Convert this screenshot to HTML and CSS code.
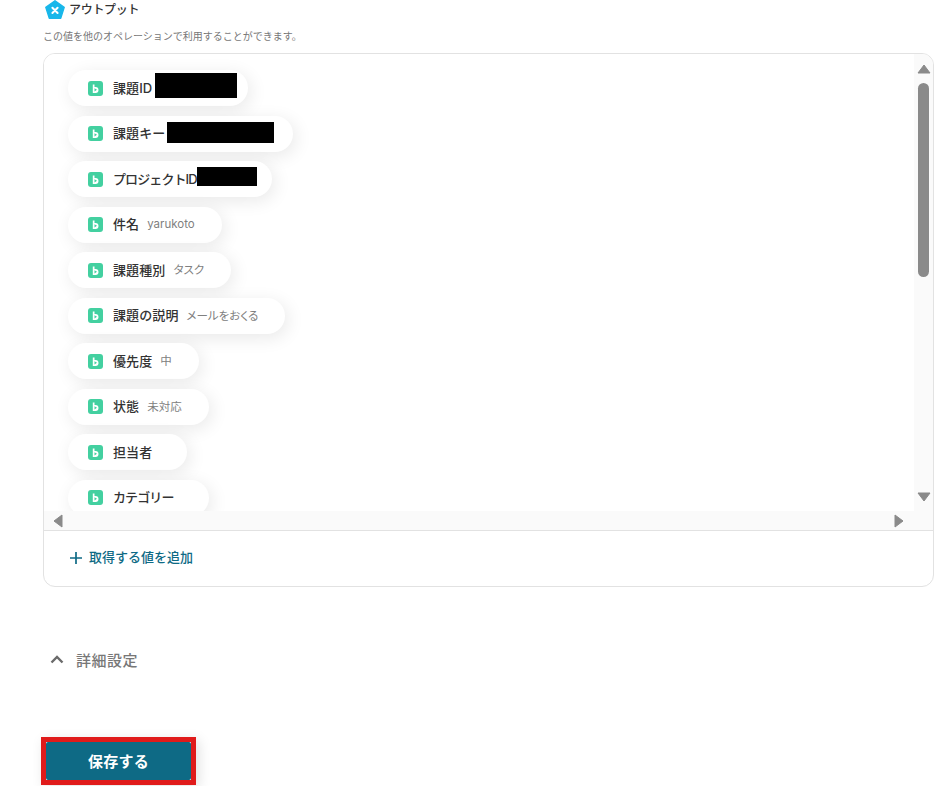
FILE: index.html
```html
<!DOCTYPE html>
<html lang="ja">
<head>
<meta charset="utf-8">
<title>アウトプット</title>
<link rel="stylesheet" href="styles.css">
</head>
<body>
<main class="page">
  <header class="heading">
    <svg class="heading-icon" viewBox="0 0 20 20" width="20" height="20"><path d="M10 .8 19.200 7.400 15.700 18.400H4.300L.8 7.400Z" fill="#18b7ea" stroke="#18b7ea" stroke-width="1.400" stroke-linejoin="round"/><path d="M7.400 7.700 12.600 13M12.600 7.700 7.400 13" stroke="#fff" stroke-width="2" stroke-linecap="round"/></svg>
    <h2 class="heading-title">アウトプット</h2>
  </header>
  <p class="hint">この値を他のオペレーションで利用することができます。</p>
  <section class="card">
    <div class="scroller">
      <div class="viewport">
        <ul class="pills">
          <li class="pill pill-1"><svg class="badge" viewBox="0 0 15 15"><rect width="15" height="15" rx="3" fill="#43d0a0"/><path fill-rule="evenodd" d="M4.800 3.600H6.500V6.100H7.600A2.900 2.900 0 0 1 7.600 11.900H4.800ZM6.500 7.300V10.400L9 8.850Z" fill="#fff"/></svg><span class="label">課題ID</span><span class="redact redact-1"></span></li>
          <li class="pill pill-2"><svg class="badge" viewBox="0 0 15 15"><rect width="15" height="15" rx="3" fill="#43d0a0"/><path fill-rule="evenodd" d="M4.800 3.600H6.500V6.100H7.600A2.900 2.900 0 0 1 7.600 11.900H4.800ZM6.500 7.300V10.400L9 8.850Z" fill="#fff"/></svg><span class="label">課題キー</span><span class="redact redact-2"></span></li>
          <li class="pill pill-3"><svg class="badge" viewBox="0 0 15 15"><rect width="15" height="15" rx="3" fill="#43d0a0"/><path fill-rule="evenodd" d="M4.800 3.600H6.500V6.100H7.600A2.900 2.900 0 0 1 7.600 11.900H4.800ZM6.500 7.300V10.400L9 8.850Z" fill="#fff"/></svg><span class="label label-tight">プロジェクトID</span><span class="redact redact-3"></span></li>
          <li class="pill"><svg class="badge" viewBox="0 0 15 15"><rect width="15" height="15" rx="3" fill="#43d0a0"/><path fill-rule="evenodd" d="M4.800 3.600H6.500V6.100H7.600A2.900 2.900 0 0 1 7.600 11.900H4.800ZM6.500 7.300V10.400L9 8.850Z" fill="#fff"/></svg><span class="label">件名</span><span class="value">yarukoto</span></li>
          <li class="pill"><svg class="badge" viewBox="0 0 15 15"><rect width="15" height="15" rx="3" fill="#43d0a0"/><path fill-rule="evenodd" d="M4.800 3.600H6.500V6.100H7.600A2.900 2.900 0 0 1 7.600 11.900H4.800ZM6.500 7.300V10.400L9 8.850Z" fill="#fff"/></svg><span class="label">課題種別</span><span class="value">タスク</span></li>
          <li class="pill"><svg class="badge" viewBox="0 0 15 15"><rect width="15" height="15" rx="3" fill="#43d0a0"/><path fill-rule="evenodd" d="M4.800 3.600H6.500V6.100H7.600A2.900 2.900 0 0 1 7.600 11.900H4.800ZM6.500 7.300V10.400L9 8.850Z" fill="#fff"/></svg><span class="label">課題の説明</span><span class="value">メールをおくる</span></li>
          <li class="pill"><svg class="badge" viewBox="0 0 15 15"><rect width="15" height="15" rx="3" fill="#43d0a0"/><path fill-rule="evenodd" d="M4.800 3.600H6.500V6.100H7.600A2.900 2.900 0 0 1 7.600 11.900H4.800ZM6.500 7.300V10.400L9 8.850Z" fill="#fff"/></svg><span class="label">優先度</span><span class="value">中</span></li>
          <li class="pill"><svg class="badge" viewBox="0 0 15 15"><rect width="15" height="15" rx="3" fill="#43d0a0"/><path fill-rule="evenodd" d="M4.800 3.600H6.500V6.100H7.600A2.900 2.900 0 0 1 7.600 11.900H4.800ZM6.500 7.300V10.400L9 8.850Z" fill="#fff"/></svg><span class="label">状態</span><span class="value">未対応</span></li>
          <li class="pill"><svg class="badge" viewBox="0 0 15 15"><rect width="15" height="15" rx="3" fill="#43d0a0"/><path fill-rule="evenodd" d="M4.800 3.600H6.500V6.100H7.600A2.900 2.900 0 0 1 7.600 11.900H4.800ZM6.500 7.300V10.400L9 8.850Z" fill="#fff"/></svg><span class="label">担当者</span><span class="value"></span></li>
          <li class="pill"><svg class="badge" viewBox="0 0 15 15"><rect width="15" height="15" rx="3" fill="#43d0a0"/><path fill-rule="evenodd" d="M4.800 3.600H6.500V6.100H7.600A2.900 2.900 0 0 1 7.600 11.900H4.800ZM6.500 7.300V10.400L9 8.850Z" fill="#fff"/></svg><span class="label label-tight">カテゴリー</span><span class="value"></span></li>
        </ul>
      </div>
      <div class="vbar">
        <svg class="arrow" viewBox="0 0 14 10" width="14" height="10"><path d="M7 1 13 9H1Z" fill="#8a8a8a" stroke="#8a8a8a" stroke-linejoin="round"/></svg>
        <div class="vthumb"></div>
        <svg class="arrow arrow-down" viewBox="0 0 14 10" width="14" height="10"><path d="M7 9 13 1H1Z" fill="#8a8a8a" stroke="#8a8a8a" stroke-linejoin="round"/></svg>
      </div>
      <div class="hbar">
        <svg viewBox="0 0 10 14" width="10" height="14"><path d="M1 7 9 1V13Z" fill="#8a8a8a" stroke="#8a8a8a" stroke-linejoin="round"/></svg>
        <svg viewBox="0 0 10 14" width="10" height="14"><path d="M9 7 1 1V13Z" fill="#8a8a8a" stroke="#8a8a8a" stroke-linejoin="round"/></svg>
      </div>
    </div>
    <div class="card-foot">
      <svg class="plus" viewBox="0 0 12 12" width="12" height="12"><path d="M6 0V12M0 6H12" stroke="#0e6a85" stroke-width="1.700"/></svg>
      <span class="add-text">取得する値を追加</span>
    </div>
  </section>
  <div class="details">
    <svg class="chevron" viewBox="0 0 14 9" width="14" height="9"><path d="M1.500 7.500 7 2l5.500 5.500" fill="none" stroke="#6b6b6b" stroke-width="2.400"/></svg>
    <span class="details-text">詳細設定</span>
  </div>
  <div class="save-frame"><button class="save" type="button">保存する</button></div>
</main>
</body>
</html>
```
FILE: styles.css
```css
* { box-sizing: border-box; }
html, body { margin: 0; height: 786px; overflow: hidden; background: #fff; }
body { font-family: Inter, "Noto Sans CJK JP", "Noto Sans", sans-serif; color: #333; }
.page { padding: 0 4px 0 43px; }
.heading { display: flex; align-items: center; gap: 4px; height: 20px; padding-left: 2px; }
.heading-icon { flex: none; }
.heading-title { margin: 0; font-size: 12px; font-weight: 500; color: #333; line-height: 20px; letter-spacing: -.3px; }
.hint { margin: 8px 0 0; font-size: 10px; line-height: 16px; color: #777; height: 25px; }
.card { border: 1px solid #e2e2e2; border-radius: 12px; height: 534px; overflow: hidden; }
.scroller { display: grid; grid-template-columns: 1fr 19px; grid-template-rows: 457px 19px; border-bottom: 1px solid #e2e2e2; }
.viewport { overflow: hidden; padding: 16px 0 0 24px; background: #fff; }
.pills { list-style: none; margin: 0; padding: 0; display: flex; flex-direction: column; align-items: flex-start; gap: 9.5px; }
.pill { flex: none; display: flex; align-items: center; height: 36px; padding: 0 27px 0 20px; border-radius: 18px; background: #fff; box-shadow: 3px 4px 18px rgba(0,0,0,.09); }
.badge { width: 15px; height: 15px; flex: none; margin-right: 10px; }
.label { font-size: 13px; font-weight: 500; color: #333; white-space: nowrap; margin-bottom: 2px; letter-spacing: .1px; }
.label-tight { letter-spacing: -.9px; }
.value { font-size: 11.500px; color: #808080; margin-left: 8px; margin-bottom: 2px; white-space: nowrap; font-feature-settings: "palt"; }
.redact { display: block; background: #000; flex: none; }
.redact-1 { width: 82px; height: 25px; margin-left: 3px; margin-top: -5px; }
.redact-2 { width: 107px; height: 21px; margin-left: 2px; margin-top: -3px; }
.redact-3 { width: 60px; height: 19px; margin-top: -5px; }
.pill-1 { width: 180px; }
.pill-2 { width: 225px; }
.pill-3 { width: 204px; }
.vbar { grid-column: 2; grid-row: 1 / span 2; background: #fafafa; display: flex; flex-direction: column; align-items: center; padding: 10px 0 0; }
.arrow { flex: none; }
.vthumb { width: 11px; height: 194px; margin-top: 9px; border-radius: 6px; background: #8a8a8a; }
.arrow-down { margin-top: 215px; }
.hbar { grid-column: 1; grid-row: 2; background: #fafafa; display: flex; align-items: center; justify-content: space-between; padding: 0 10px 0 9px; }
.card-foot { display: flex; align-items: center; height: 55px; padding: 0 0 2px 26px; gap: 7px; }
.plus { flex: none; }
.add-text { font-size: 13px; font-weight: 500; color: #0e6a85; margin-bottom: 2px; }
.details { display: flex; align-items: center; gap: 12px; height: 20px; margin: 62px 0 0 7px; }
.chevron { flex: none; }
.details-text { font-size: 15px; font-weight: 500; color: #777; letter-spacing: .5px; }
.save-frame { width: 155px; height: 48px; margin: 68px 0 0 -2px; border: 5px solid #e01b1b; box-shadow: 3px 3px 12px rgba(0,0,0,.12); }
.save { display: block; width: 100%; height: 100%; border: 0; border-radius: 2px; padding: 0 0 1px; background: #0e6a85; color: #fff; font-family: inherit; font-size: 15px; font-weight: 700; letter-spacing: .2px; }
```
